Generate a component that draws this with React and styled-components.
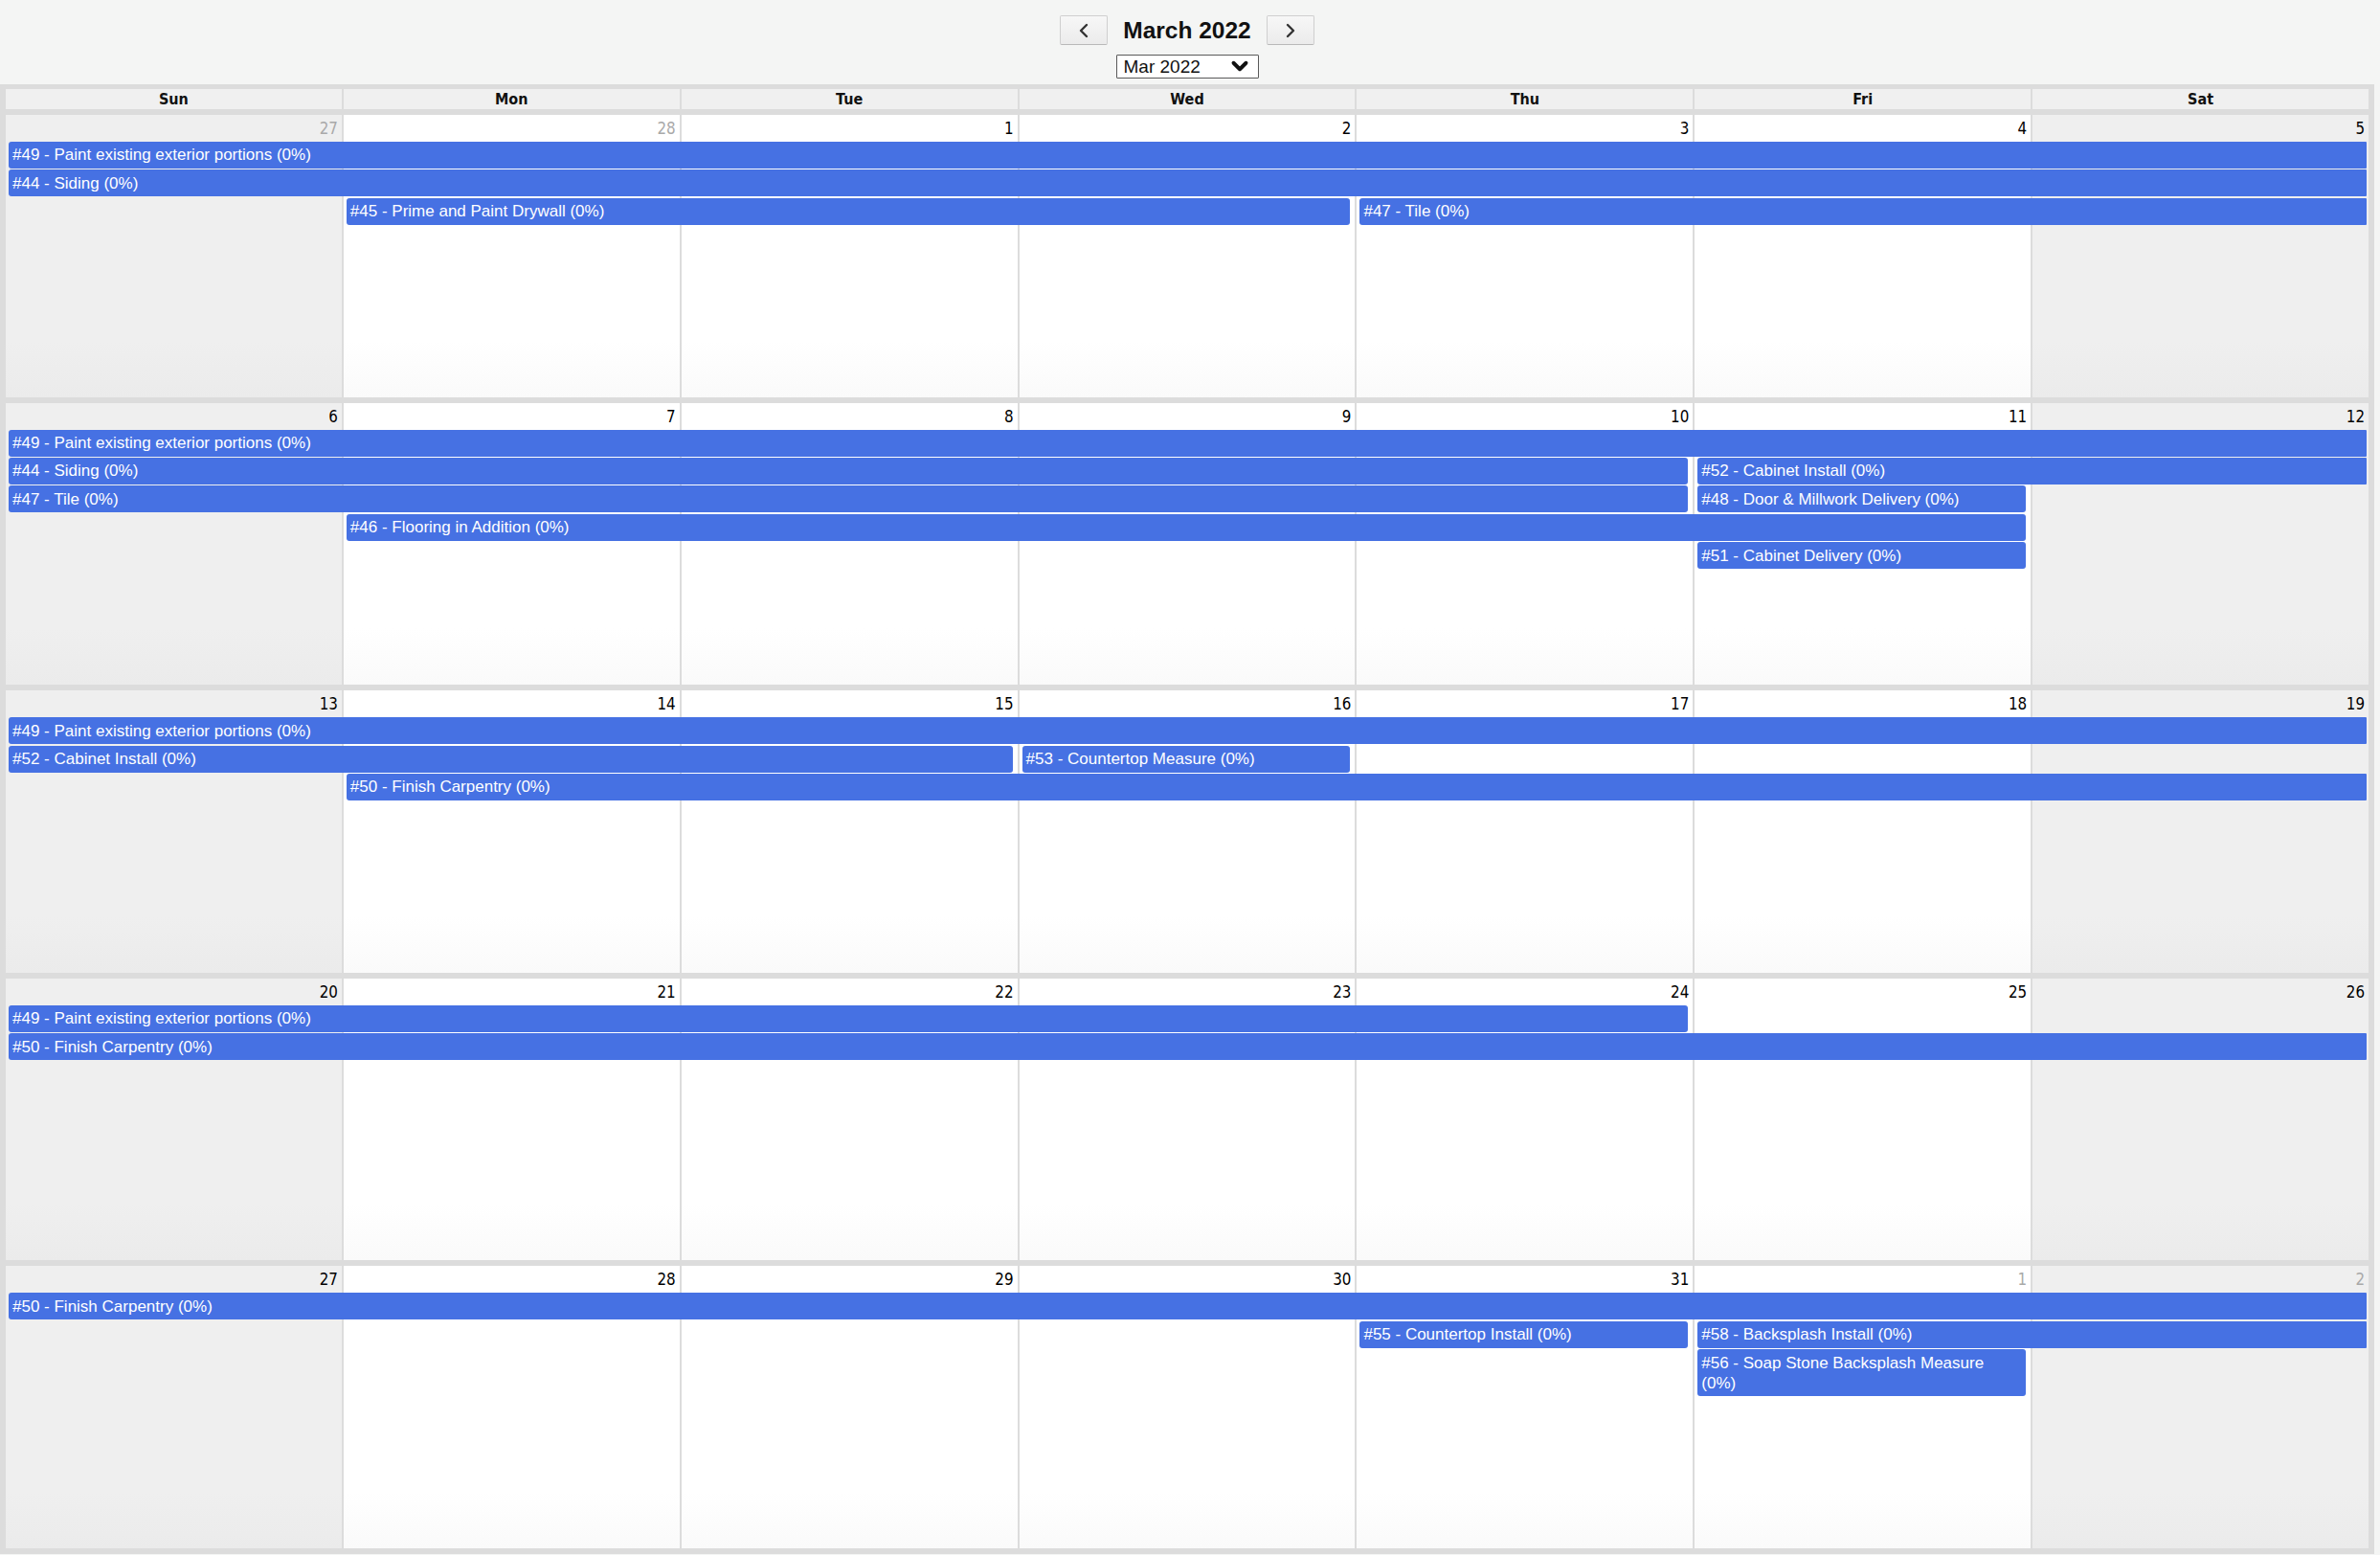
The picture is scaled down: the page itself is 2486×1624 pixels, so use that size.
import React from 'react';
import styled, { createGlobalStyle } from 'styled-components';
import { ChevronLeft, ChevronRight, ChevronDown } from 'lucide-react';

const GlobalStyle = createGlobalStyle`
  html, body {
    margin: 0;
    padding: 0;
    background: #f4f5f4;
  }
  * {
    box-sizing: border-box;
  }
`;

const BORDER = '#dcdcdc';
const BAR = '#4671e3';

const Page = styled.div`
  width: 2480px;
  font-family: "Liberation Sans", Arial, sans-serif;
`;

const Toolbar = styled.div`
  height: 88px;
  padding-top: 16px;
  display: flex;
  flex-direction: column;
  align-items: center;
  gap: 9.5px;
`;

const NavRow = styled.div`
  display: flex;
  align-items: center;
  gap: 16.5px;
`;

const NavButton = styled.button`
  width: 50px;
  height: 31px;
  padding: 0;
  display: flex;
  align-items: center;
  justify-content: center;
  border: 1px solid #cfcfcf;
  border-bottom-color: #b9b9b9;
  border-radius: 2px;
  background: linear-gradient(to bottom, #f7f7f7, #ebebeb);
  color: #333;
  cursor: pointer;
`;

const Title = styled.h1`
  margin: 0;
  font-size: 24.5px;
  font-weight: bold;
  color: #111;
  line-height: 31px;
`;

const SelectBox = styled.label`
  width: 149px;
  height: 25px;
  display: flex;
  align-items: center;
  border: 1.5px solid #5a5a5a;
  border-radius: 1px;
  background: #fff;
  padding: 0 6px 0 7px;
  color: #111;

  select {
    flex: 1;
    appearance: none;
    border: none;
    outline: none;
    background: transparent;
    padding: 0;
    font-family: "Liberation Sans", Arial, sans-serif;
    font-size: 19px;
    color: #111;
  }
`;

const Calendar = styled.div`
  background: ${BORDER};
  padding: 5px 6px 6px 4px;
  display: flex;
  flex-direction: column;
  gap: 6px;
`;

const HeadRow = styled.div`
  display: grid;
  grid-template-columns: repeat(7, 1fr);
  height: 21px;
`;

const HeadCell = styled.div`
  border-left: 2px solid ${BORDER};
  background: #f0f0f0;
  text-align: center;
  font-family: "DejaVu Sans Condensed", "DejaVu Sans", sans-serif;
  font-weight: bold;
  font-size: 16px;
  line-height: 21px;
  color: #111;
`;

const Week = styled.div`
  display: grid;
  grid-template-columns: repeat(7, 1fr);
  grid-template-rows: 26.6px repeat(${(p) => p.$rows}, minmax(28px, auto)) 1fr;
  row-gap: 1.4px;
  height: 294.6px;
`;

const DayCell = styled.div`
  grid-column: ${(p) => p.$col + 1};
  grid-row: 1 / -1;
  border-left: 2px solid ${BORDER};
  background: ${(p) =>
    p.$weekend
      ? 'linear-gradient(to bottom, #efefef 80%, #ebebeb 100%)'
      : 'linear-gradient(to bottom, #ffffff 80%, #fafafa 100%)'};
`;

const DayNum = styled.div`
  height: 28px;
  padding-right: 4px;
  text-align: right;
  font-family: "DejaVu Sans Condensed", "DejaVu Sans", sans-serif;
  font-size: 16.8px;
  line-height: 28px;
  color: ${(p) => (p.$other ? '#a9a9a9' : '#000')};
`;

const Bar = styled.div`
  grid-column: ${(p) => p.$start + 1} / span ${(p) => p.$span};
  grid-row: ${(p) => p.$row + 2};
  margin-left: 5px;
  margin-right: ${(p) => (p.$cont ? '2px' : '5px')};
  border-radius: ${(p) => (p.$cont ? '3px 1px 1px 3px' : '3px')};
  background: ${BAR};
  color: #fff;
  font-size: 17px;
  line-height: 21px;
  padding: 3.5px 8px 3.5px 4px;
  overflow: hidden;
  cursor: pointer;
`;

const DAY_NAMES = ['Sun', 'Mon', 'Tue', 'Wed', 'Thu', 'Fri', 'Sat'];

const ev = (id, name, row, start, end) => ({
  id,
  label: `#${id} - ${name} (0%)`,
  row,
  start,
  span: end - start + 1,
  cont: end === 6,
});

const weeks = [
  {
    days: [[27, true], [28, true], [1], [2], [3], [4], [5]],
    events: [
      ev(49, 'Paint existing exterior portions', 0, 0, 6),
      ev(44, 'Siding', 1, 0, 6),
      ev(45, 'Prime and Paint Drywall', 2, 1, 3),
      ev(47, 'Tile', 2, 4, 6),
    ],
  },
  {
    days: [[6], [7], [8], [9], [10], [11], [12]],
    events: [
      ev(49, 'Paint existing exterior portions', 0, 0, 6),
      ev(44, 'Siding', 1, 0, 4),
      ev(52, 'Cabinet Install', 1, 5, 6),
      ev(47, 'Tile', 2, 0, 4),
      ev(48, 'Door & Millwork Delivery', 2, 5, 5),
      ev(46, 'Flooring in Addition', 3, 1, 5),
      ev(51, 'Cabinet Delivery', 4, 5, 5),
    ],
  },
  {
    days: [[13], [14], [15], [16], [17], [18], [19]],
    events: [
      ev(49, 'Paint existing exterior portions', 0, 0, 6),
      ev(52, 'Cabinet Install', 1, 0, 2),
      ev(53, 'Countertop Measure', 1, 3, 3),
      ev(50, 'Finish Carpentry', 2, 1, 6),
    ],
  },
  {
    days: [[20], [21], [22], [23], [24], [25], [26]],
    events: [
      ev(49, 'Paint existing exterior portions', 0, 0, 4),
      ev(50, 'Finish Carpentry', 1, 0, 6),
    ],
  },
  {
    days: [[27], [28], [29], [30], [31], [1, true], [2, true]],
    events: [
      ev(50, 'Finish Carpentry', 0, 0, 6),
      ev(55, 'Countertop Install', 1, 4, 4),
      ev(58, 'Backsplash Install', 1, 5, 6),
      ev(56, 'Soap Stone Backsplash Measure', 2, 5, 5),
    ],
  },
];

export default function App() {
  return (
    <>
      <GlobalStyle />
      <Page>
        <Toolbar>
          <NavRow>
            <NavButton aria-label="Previous month">
              <ChevronLeft size={24} strokeWidth={2.4} />
            </NavButton>
            <Title>March 2022</Title>
            <NavButton aria-label="Next month">
              <ChevronRight size={24} strokeWidth={2.4} />
            </NavButton>
          </NavRow>
          <SelectBox>
            <select defaultValue="2022-03">
              <option value="2022-02">Feb 2022</option>
              <option value="2022-03">Mar 2022</option>
              <option value="2022-04">Apr 2022</option>
            </select>
            <ChevronDown size={26} strokeWidth={3.6} />
          </SelectBox>
        </Toolbar>

        <Calendar>
          <HeadRow>
            {DAY_NAMES.map((d) => (
              <HeadCell key={d}>{d}</HeadCell>
            ))}
          </HeadRow>

          {weeks.map((week, wi) => {
            const rows = Math.max(...week.events.map((e) => e.row)) + 1;
            return (
              <Week key={wi} $rows={rows}>
                {week.days.map(([num, other], di) => (
                  <DayCell key={di} $col={di} $weekend={di === 0 || di === 6}>
                    <DayNum $other={other}>{num}</DayNum>
                  </DayCell>
                ))}
                {week.events.map((e) => (
                  <Bar
                    key={`${e.id}-${e.start}`}
                    $row={e.row}
                    $start={e.start}
                    $span={e.span}
                    $cont={e.cont}
                  >
                    {e.label}
                  </Bar>
                ))}
              </Week>
            );
          })}
        </Calendar>
      </Page>
    </>
  );
}
